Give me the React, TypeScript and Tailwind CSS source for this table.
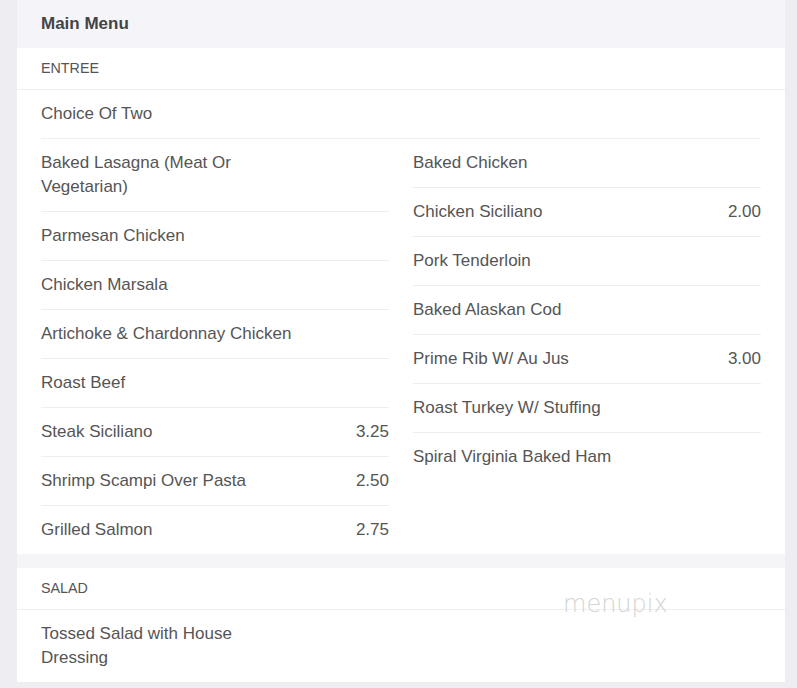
import React from "react";

type Item = { name: string; price?: string };

const left: Item[] = [
  { name: "Baked Lasagna (Meat Or Vegetarian)" },
  { name: "Parmesan Chicken" },
  { name: "Chicken Marsala" },
  { name: "Artichoke & Chardonnay Chicken" },
  { name: "Roast Beef" },
  { name: "Steak Siciliano", price: "3.25" },
  { name: "Shrimp Scampi Over Pasta", price: "2.50" },
  { name: "Grilled Salmon", price: "2.75" },
];

const right: Item[] = [
  { name: "Baked Chicken" },
  { name: "Chicken Siciliano", price: "2.00" },
  { name: "Pork Tenderloin" },
  { name: "Baked Alaskan Cod" },
  { name: "Prime Rib W/ Au Jus", price: "3.00" },
  { name: "Roast Turkey W/ Stuffing" },
  { name: "Spiral Virginia Baked Ham" },
];

function Row({ item, last }: { item: Item; last: boolean }) {
  return (
    <div
      className={
        "flex justify-between gap-4 py-3 text-[17px] leading-6 text-[#555555] " +
        (last ? "" : "border-b border-[#eeeeee]")
      }
    >
      <span className="max-w-[252px]">{item.name}</span>
      {item.price && <span>{item.price}</span>}
    </div>
  );
}

function Column({ items }: { items: Item[] }) {
  return (
    <div className="flex flex-col">
      {items.map((it, i) => (
        <Row key={it.name} item={it} last={i === items.length - 1} />
      ))}
    </div>
  );
}

export default function App() {
  return (
    <div
      className="min-h-[688px] bg-[#ededf2] pl-[17px] pr-[12px]"
      style={{ fontFamily: '"Liberation Sans", Arial, sans-serif' }}
    >
      <div className="bg-[#f5f5f7]">
        <div className="h-[48px] bg-[#f5f5f9] px-6 flex items-center text-[17px] font-bold text-[#444444]">
          Main Menu
        </div>
        <div className="bg-white">
          <div className="px-6 py-[10px] border-b border-[#f0f0f0] text-[14.3px] leading-[21px] text-[#555555]">
            ENTREE
          </div>
          <div className="px-6">
            <div className="border-b border-[#f0f0f0]">
              <Row item={{ name: "Choice Of Two" }} last={true} />
            </div>
            <div className="grid grid-cols-2 gap-x-6">
              <Column items={left} />
              <Column items={right} />
            </div>
          </div>
        </div>
        <div className="h-[14px]" />
        <div className="relative bg-white">
          <div className="px-6 py-[10px] border-b border-[#f0f0f0] text-[14.3px] leading-[21px] text-[#555555]">
            SALAD
          </div>
          <div className="px-6 grid grid-cols-2 gap-x-6">
            <Column items={[{ name: "Tossed Salad with House Dressing" }]} />
            <div />
          </div>
          <div
            className="absolute left-[546px] top-[24px] text-[24px] leading-none text-[#d4d4d4]"
            style={{ fontFamily: '"DejaVu Sans", sans-serif', fontWeight: 200 }}
          >
            menupix
          </div>
        </div>
        <div className="h-[7px] bg-[#ededf2]" />
      </div>
    </div>
  );
}
